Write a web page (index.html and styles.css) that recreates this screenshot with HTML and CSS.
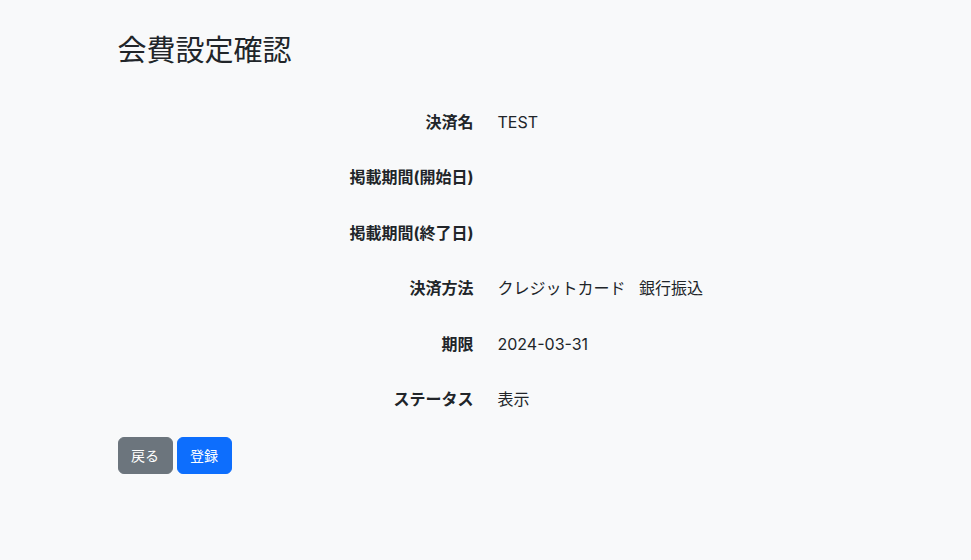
FILE: index.html
```html
<!DOCTYPE html>
<html lang="ja">
<head>
    <title>会費設定確認</title>
    <meta charset="UTF-8">
    <link rel="stylesheet" href="styles.css">
</head>

<body>

<div class="container">
    <h3 class="page-title">会費設定確認</h3>

    <div class="detail-list">
        <div class="detail-row">
            <div class="detail-label">決済名</div>
            <div class="detail-value">TEST</div>
        </div>
        <div class="detail-row">
            <div class="detail-label">掲載期間(開始日)</div>
            <div class="detail-value"></div>
        </div>
        <div class="detail-row">
            <div class="detail-label">掲載期間(終了日)</div>
            <div class="detail-value"></div>
        </div>
        <div class="detail-row">
            <div class="detail-label">決済方法</div>
            <div class="detail-value">クレジットカード&nbsp;&nbsp;&nbsp;銀行振込</div>
        </div>
        <div class="detail-row">
            <div class="detail-label">期限</div>
            <div class="detail-value">2024-03-31</div>
        </div>
        <div class="detail-row">
            <div class="detail-label">ステータス</div>
            <div class="detail-value">表示</div>
        </div>
    </div>

    <div class="actions">
        <button type="button" class="btn btn-back">戻る</button>
        <button type="submit" class="btn btn-submit">登録</button>
    </div>
</div>

</body>
</html>
```

FILE: styles.css
```css
body {
    margin: 0;
    background-color: #f8f9fa;
    color: #212529;
    font-family: Inter, "Noto Sans CJK JP", sans-serif;
    font-size: 16px;
    line-height: 1.5;
}

.container {
    max-width: 736px;
    margin: 0 auto;
    padding: 34px 0 40px;
}

.page-title {
    margin: 0 0 41px;
    font-size: 29px;
    font-weight: 400;
    line-height: 1.2;
}

.detail-row {
    display: grid;
    grid-template-columns: 1fr 1fr;
    column-gap: 24px;
    height: 55.5px;
    align-items: start;
}

.detail-label {
    text-align: right;
    font-weight: 700;
}

.detail-value {
    min-height: 24px;
}

.actions {
    display: flex;
    gap: 4px;
    margin-top: -6px;
}

.btn {
    padding: 6px 12.5px;
    border: 1px solid transparent;
    border-radius: 6px;
    font-family: inherit;
    font-size: 14px;
    line-height: 23px;
    color: #fff;
    cursor: pointer;
}

.btn-back {
    background-color: #6c757d;
    border-color: #6c757d;
}

.btn-submit {
    background-color: #0d6efd;
    border-color: #0d6efd;
}
```
